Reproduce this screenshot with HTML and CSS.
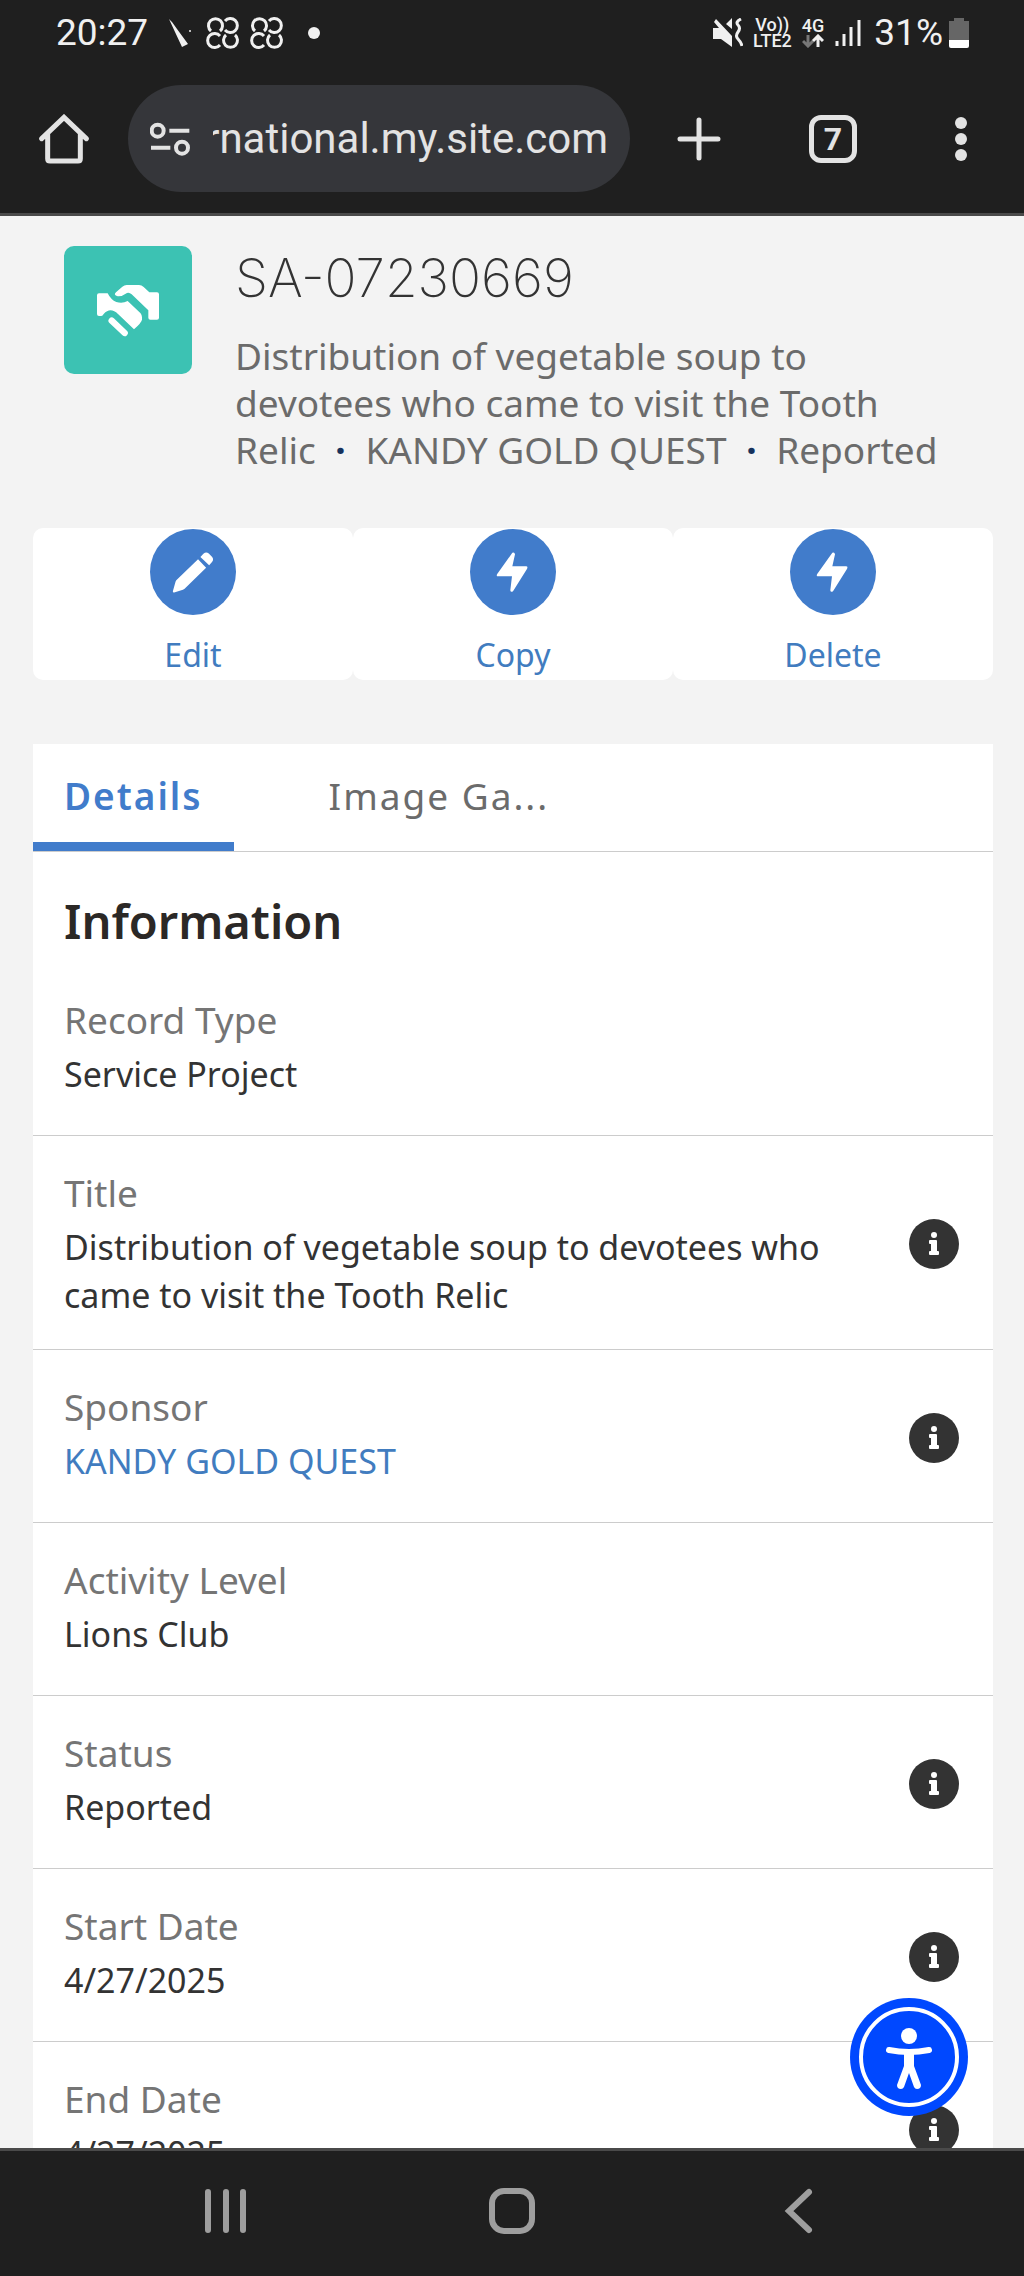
FILE: index.html
```html
<!DOCTYPE html>
<html lang="en">
<head>
    <meta charset="UTF-8">
    <meta name="viewport" content="width=device-width, initial-scale=1.0">
    <title>SA-07230669</title>
    <link rel="stylesheet" href="styles.css">
</head>
<body>
    <header class="browser">
        <!-- Status bar -->
        <div class="status-bar">
            <div class="status-left">
                <span class="clock">20:27</span>
                <svg width="24" height="30" viewBox="0 0 24 30"><path d="M1 1l3 3 5 7 11 15-6 3-7-15z" fill="#f0f0f0"/><circle cx="22" cy="13" r="1" fill="#f0f0f0"/></svg>
                <svg class="clover" width="34" height="34" viewBox="0 0 34 34"><use href="#clover"/></svg>
                <svg class="clover second" width="34" height="34" viewBox="0 0 34 34"><use href="#clover"/></svg>
                <span class="dot"></span>
            </div>
            <div class="status-right">
                <svg width="30" height="30" viewBox="0 0 30 30">
                    <path d="M3 1l16 17v11L8 21H0V10h6L1 4zM13 6l6-6v11z" fill="#f0f0f0"/>
                    <path d="M28 1q-6 3-3 6t0 7 0 7 4 7" fill="none" stroke="#f0f0f0" stroke-width="3"/>
                </svg>
                <div class="network"><span>Vo))</span><span>LTE2</span></div>
                <div class="network">
                    <span>4G</span>
                    <svg width="22" height="14" viewBox="0 0 22 14">
                        <path d="M6 1v11M1 7l5 5 5-5" fill="none" stroke="#777" stroke-width="3"/>
                        <path d="M16 13V2M11 7l5-5 5 5" fill="none" stroke="#f0f0f0" stroke-width="3"/>
                    </svg>
                </div>
                <svg class="signal" width="28" height="28" viewBox="0 0 28 28"><path d="M3 22v5M10 15v12M17 8v19M25 1v26" stroke="#f0f0f0" stroke-width="3"/></svg>
                <span class="clock">31%</span>
                <svg class="battery" width="20" height="30" viewBox="0 0 20 30"><path d="M5 0h10v3h5v19H0V3h5z" fill="#666"/><path d="M0 22h20v6q0 2-2 2H2q-2 0-2-2z" fill="#fff"/></svg>
            </div>
        </div>

        <!-- Browser toolbar -->
        <div class="toolbar">
            <button type="button" class="tool home" aria-label="Home">
                <svg width="50" height="50" viewBox="119 342 150 150"><path d="M127 416L194 352l67 64M145 402v74q0 7 7 7h84q7 0 7-7v-74" fill="none" stroke="#e3e3e3" stroke-width="15" stroke-linecap="round"/></svg>
            </button>
            <div class="address">
                <svg width="40" height="34" viewBox="450 364 120 102">
                    <g fill="none" stroke="#e3e3e3" stroke-width="12"><circle cx="473" cy="390" r="18"/><circle cx="546" cy="441" r="18"/><path d="M508 390h60M453 441h58"/></g>
                </svg>
                <div class="url"><input type="text" aria-label="Address" value="rnational.my.site.com"></div>
            </div>
            <button type="button" class="tool new-tab" aria-label="New tab">
                <svg width="44" height="44" viewBox="0 0 44 44"><path d="M22 3v38M3 22h38" stroke="#e3e3e3" stroke-width="5" stroke-linecap="round"/></svg>
            </button>
            <button type="button" class="tool tabs-open" aria-label="Open tabs"><span>7</span></button>
            <button type="button" class="tool menu" aria-label="Menu">
                <svg width="12" height="44" viewBox="0 0 12 44" fill="#e3e3e3"><circle cx="6" cy="6" r="6"/><circle cx="6" cy="22" r="6"/><circle cx="6" cy="38" r="6"/></svg>
            </button>
        </div>
    </header>

    <main class="page">
        <div class="record-header">
            <svg class="record-icon" width="128" height="128" viewBox="192 78 384 384" fill="#fff">
                <path d="M291 226q0-6 6-6h26q10 20 26 26 18 6 34-3l38 36q6 6 5 20-1 8-24 29l-48-46q-23-22-43 0-3 6-7 6h-7q-6 0-6-6z"/>
                <path d="M348 217l19-17q6-5 13-5h37q8 0 14 6l17 16h23q6 0 6 6v70q0 6-6 6h-20q-6 0-6-6v-22l-50-48q-9-9-18-2-12 9-24 8-14-4-5-12z"/>
                <path d="M335 302l39 37" stroke="#fff" stroke-width="19" stroke-linecap="round"/>
            </svg>
            <div class="record-text">
                <h1>SA-07230669</h1>
                <p>Distribution of vegetable soup to devotees who came to visit the Tooth Relic <span class="sep">·</span> KANDY GOLD QUEST <span class="sep">·</span> Reported</p>
            </div>
        </div>

        <div class="actions">
            <button type="button">
                <svg width="86" height="86" viewBox="448 87 256 256"><circle cx="576" cy="215" r="128" fill="#417ccb"/><path d="M516 272l8-28q1-3 3-5l64-62 24 25-64 63q-2 2-5 3l-26 8q-4 1-4-4zM598 170l9-9q8-8 16-1l10 10q6 8-1 16l-8 9z" fill="#fff"/></svg>
                Edit
            </button>
            <button type="button">
                <svg width="86" height="86" viewBox="832 87 256 256"><use href="#bolt"/></svg>
                Copy
            </button>
            <button type="button">
                <svg width="86" height="86" viewBox="832 87 256 256"><use href="#bolt"/></svg>
                Delete
            </button>
        </div>

        <section class="card">
            <nav class="tabs">
                <a href="#details" class="active">Details</a>
                <a href="#gallery">Image Ga...</a>
            </nav>
            <h2>Information</h2>
            <dl class="fields" id="details">
                <div class="field">
                    <div><dt>Record Type</dt><dd>Service Project</dd></div>
                </div>
                <div class="field">
                    <div><dt>Title</dt><dd>Distribution of vegetable soup to devotees who came to visit the Tooth Relic</dd></div>
                    <button type="button" class="info" aria-label="Help"><svg width="50" height="50" viewBox="0 0 50 50"><use href="#info"/></svg></button>
                </div>
                <div class="field">
                    <div><dt>Sponsor</dt><dd><a href="#">KANDY GOLD QUEST</a></dd></div>
                    <button type="button" class="info" aria-label="Help"><svg width="50" height="50" viewBox="0 0 50 50"><use href="#info"/></svg></button>
                </div>
                <div class="field">
                    <div><dt>Activity Level</dt><dd>Lions Club</dd></div>
                </div>
                <div class="field">
                    <div><dt>Status</dt><dd>Reported</dd></div>
                    <button type="button" class="info" aria-label="Help"><svg width="50" height="50" viewBox="0 0 50 50"><use href="#info"/></svg></button>
                </div>
                <div class="field">
                    <div><dt>Start Date</dt><dd>4/27/2025</dd></div>
                    <button type="button" class="info" aria-label="Help"><svg width="50" height="50" viewBox="0 0 50 50"><use href="#info"/></svg></button>
                </div>
                <div class="field">
                    <div><dt>End Date</dt><dd>4/27/2025</dd></div>
                    <button type="button" class="info" aria-label="Help"><svg width="50" height="50" viewBox="0 0 50 50"><use href="#info"/></svg></button>
                </div>
            </dl>
        </section>

        <button type="button" class="accessibility" aria-label="Accessibility">
            <svg width="118" height="118" viewBox="0 0 118 118">
                <circle cx="59" cy="59" r="59" fill="#0048ff"/>
                <circle cx="59" cy="59" r="48" fill="none" stroke="#fff" stroke-width="4"/>
                <circle cx="59" cy="38" r="8" fill="#fff"/>
                <path d="M39 52q20 4 40 0" fill="none" stroke="#fff" stroke-width="6" stroke-linecap="round"/>
                <path d="M54 52h10v16l7 19q0 4-4 4-2 0-3-2l-5-14-5 14q-1 2-3 2-4 0-4-4l7-19z" fill="#fff"/>
            </svg>
        </button>
    </main>

    <!-- Phone navigation -->
    <nav class="phone-nav">
        <button type="button" aria-label="Recent apps"><svg width="48" height="48" viewBox="0 0 48 48"><path d="M6 5v38M24 5v38M41 5v38" stroke="#9e9e9e" stroke-width="6" stroke-linecap="round"/></svg></button>
        <button type="button" aria-label="Home screen"><svg width="48" height="48" viewBox="0 0 48 48"><rect x="4" y="4" width="40" height="40" rx="12" fill="none" stroke="#9e9e9e" stroke-width="6"/></svg></button>
        <button type="button" aria-label="Back"><svg width="48" height="48" viewBox="0 0 48 48"><path d="M35 5L15 24l20 19" fill="none" stroke="#9e9e9e" stroke-width="6" stroke-linecap="round"/></svg></button>
    </nav>

    <!-- Shared shapes -->
    <svg class="shapes" width="0" height="0">
        <defs>
            <g id="clover" fill="none" stroke="#f0f0f0" stroke-width="3">
                <path d="M5 15a7 7 0 1 1 9 0"/>
                <path d="M19 5a7 7 0 1 1 0 9"/>
                <path d="M14 20a7 7 0 1 0 0 9"/>
                <path d="M20 19a7 7 0 1 0 9 0"/>
            </g>
            <g id="bolt">
                <circle cx="960" cy="215" r="128" fill="#417ccb"/>
                <path d="M958 158l-45 63q-4 7 3 7h41l-5 41q1 8 8 3l42-67q3-7-3-7h-41l8-36q-2-8-8-4z" fill="#fff"/>
            </g>
            <g id="info">
                <circle cx="25" cy="25" r="25" fill="#333"/>
                <circle cx="25" cy="16" r="3" fill="#fff"/>
                <path d="M20 22q0-1 1-1h6q1 0 1 1v10h1q1 0 1 1v2q0 1-1 1h-8q-1 0-1-1v-2q0-1 1-1h1v-7h-1q-1 0-1-1z" fill="#fff"/>
            </g>
        </defs>
    </svg>
</body>
</html>
```

FILE: styles.css
```css
* {
    box-sizing: border-box;
}
body {
    margin: 0;
    height: 100vh;
    display: flex;
    flex-direction: column;
    overflow: hidden;
    background: #f3f3f3;
    color: #333;
    font-family: "Noto Sans", "Open Sans", sans-serif;
    font-size: 34px;
    line-height: 48px;
}
button {
    border: none;
    background: none;
    padding: 0;
    font: inherit;
    cursor: pointer;
}
a {
    color: #417cbf;
    text-decoration: none;
}
svg {
    display: block;
    flex: none;
}
.shapes {
    position: absolute;
}

/* browser chrome */
.browser {
    flex: none;
    background: #1f1f1f;
    border-bottom: 3px solid #4a4a4a;
    color: #f0f0f0;
    font-family: Roboto, sans-serif;
}
.status-bar {
    height: 66px;
    padding: 0 55px 0 56px;
    display: flex;
    justify-content: space-between;
    align-items: center;
}
.status-left, .status-right {
    display: flex;
    align-items: center;
}
.clock {
    font-size: 37px;
}
.status-left .clock {
    margin-right: 20px;
}
.clover {
    margin-left: 14px;
}
.clover.second {
    margin-left: 10px;
}
.dot {
    width: 12px;
    height: 12px;
    margin-left: 24px;
    border-radius: 50%;
    background: #f0f0f0;
}
.network {
    display: flex;
    flex-direction: column;
    align-items: center;
    margin-left: 10px;
    font-size: 18px;
    font-weight: 500;
    line-height: 16px;
}
.signal {
    margin: 0 12px 0 10px;
}
.battery {
    margin-left: 6px;
}
.toolbar {
    display: flex;
    align-items: center;
    padding: 19px 0 21px;
}
.tool {
    display: flex;
    justify-content: center;
    align-items: center;
    height: 107px;
    color: #e3e3e3;
}
.home {
    width: 128px;
}
.new-tab {
    width: 138px;
}
.tabs-open {
    width: 130px;
}
.menu {
    width: 126px;
}
.tabs-open span {
    width: 48px;
    height: 48px;
    border: 5px solid #e3e3e3;
    border-radius: 12px;
    font-size: 32px;
    font-weight: 700;
    line-height: 38px;
}
.address {
    flex: 1;
    min-width: 0;
    height: 107px;
    padding: 0 22px;
    display: flex;
    align-items: center;
    gap: 23px;
    border-radius: 54px;
    background: #35363a;
}
.url {
    flex: 1;
    min-width: 0;
    display: flex;
    justify-content: flex-end;
    overflow: hidden;
}
.url input {
    flex: none;
    width: 440px;
    padding: 0;
    border: none;
    background: none;
    color: #e3e3e3;
    font-family: Roboto, sans-serif;
    font-size: 42px;
    text-align: right;
}

/* record page */
.page {
    flex: 1;
    min-height: 0;
    padding: 30px 31px 0 33px;
    position: relative;
    overflow: hidden;
}
.record-header {
    display: flex;
    gap: 43px;
    padding: 0 31px;
}
.record-icon {
    border-radius: 10px;
    background: #3cc2b3;
}
.record-text {
    flex: 1;
}
h1 {
    margin: 0 0 22px;
    font-family: Inter, "Open Sans", sans-serif;
    font-size: 53px;
    font-weight: 200;
    line-height: 64px;
}
.record-text p {
    margin: 0;
    color: #6b6b6b;
    font-size: 37px;
    line-height: 47px;
}
.sep {
    margin: 0 10px;
    color: #16325c;
    font-weight: 700;
}
.actions {
    display: flex;
    margin-top: 55px;
}
.actions button {
    flex: 1;
    display: flex;
    flex-direction: column;
    align-items: center;
    gap: 16px;
    padding: 1px 0;
    border-radius: 10px;
    background: #fff;
    color: #417cbf;
    font-size: 32px;
}
.card {
    margin-top: 64px;
    background: #fff;
}
.tabs {
    display: flex;
    gap: 64px;
    border-bottom: 1px solid #ccc;
}
.tabs a {
    padding: 28px 31px 22px;
    border-bottom: 9px solid transparent;
    color: #6b6b6b;
    font-size: 37px;
    letter-spacing: 2px;
}
.tabs .active {
    border-bottom-color: #417ccb;
    color: #417ccb;
    font-weight: 600;
}
h2 {
    margin: 0;
    padding: 37px 31px 10px;
    color: #2b2826;
    font-size: 47px;
    font-weight: 600;
    line-height: 64px;
}
.fields {
    margin: 0;
}
.field {
    display: flex;
    justify-content: space-between;
    min-height: 173px;
    padding: 33px 34px 30px 31px;
    border-bottom: 1px solid #ccc;
}
dt {
    margin-bottom: 6px;
    color: #757575;
    font-size: 37px;
}
dd {
    margin: 0;
}
.info {
    flex: none;
    align-self: center;
    margin-left: 40px;
}
.accessibility {
    position: absolute;
    right: 56px;
    bottom: 32px;
}

.phone-nav {
    flex: none;
    display: flex;
    justify-content: space-between;
    padding: 36px 202px 41px;
    border-top: 3px solid #4a4a4a;
    background: #1f1f1f;
}
```
